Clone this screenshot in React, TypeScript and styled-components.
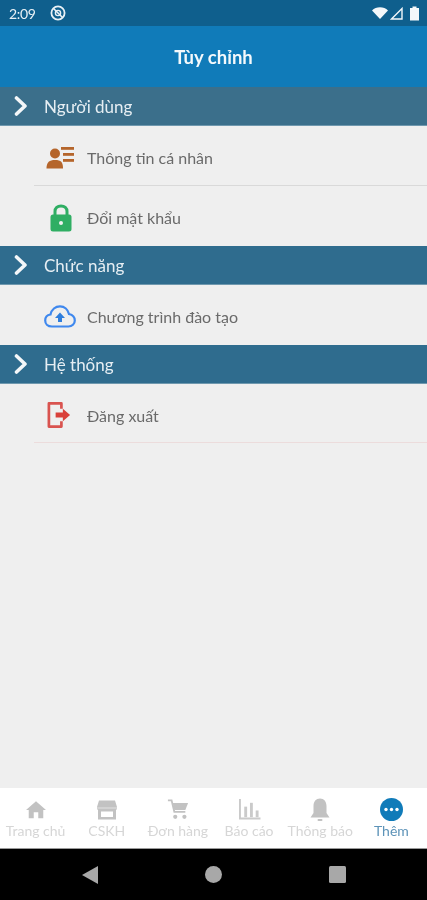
import React from 'react'
import styled, { createGlobalStyle } from 'styled-components'

const GlobalStyle = createGlobalStyle`
  html, body { margin: 0; padding: 0; background: #efefef; }
  body { font-family: "Lato", "Noto Sans", sans-serif; }
`

const Screen = styled.div`
  width: 427px;
  height: 900px;
  display: flex;
  flex-direction: column;
  background: #efefef;
  overflow: hidden;
  filter: blur(0.5px);
`

const StatusBar = styled.div`
  height: 26px;
  flex: none;
  display: flex;
  align-items: center;
  padding: 0 7px 0 9px;
  box-sizing: border-box;
  background: #0f5f8d;
  color: #e9f1f6;
  font-size: 14px;
`

const StatusTime = styled.span`
  width: 41px;
  letter-spacing: -0.3px;
`

const StatusRight = styled.div`
  margin-left: auto;
  display: flex;
  align-items: center;
  gap: 2px;
`

const Header = styled.div`
  height: 61px;
  flex: none;
  display: flex;
  align-items: center;
  justify-content: center;
  box-sizing: border-box;
  background: #107bb9;
  color: #f4f9fc;
  font-size: 18.5px;
  font-weight: 700;
`

const Section = styled.div<{ $first?: boolean }>`
  height: 39px;
  flex: none;
  display: flex;
  align-items: center;
  gap: 16px;
  padding-left: 14px;
  box-sizing: border-box;
  background: ${p => (p.$first ? '#3b6f8b' : '#2f6c8e')};
  border-bottom: 1px solid #6f98ae;
  color: #e6eef3;
  font-size: 17px;
`

const Row = styled.div<{ $line?: string; $height?: number }>`
  height: ${p => p.$height ?? 60}px;
  flex: none;
  margin-left: 34px;
  padding-top: ${p => (p.$height ? 4 : 3)}px;
  display: flex;
  align-items: center;
  box-sizing: border-box;
  border-bottom: ${p => (p.$line ? `1px solid ${p.$line}` : 'none')};
  color: #6a6a6a;
  font-size: 16px;
`

const IconSlot = styled.div<{ $nudge?: number }>`
  width: 53px;
  flex: none;
  display: flex;
  justify-content: center;
  box-sizing: border-box;
  padding-right: ${p => p.$nudge ?? 0}px;
`

const Spacer = styled.div`
  flex: 1;
`

const TabBar = styled.div`
  height: 61px;
  flex: none;
  display: grid;
  grid-template-columns: repeat(6, 1fr);
  background: #fff;
  border-bottom: 1px solid #9a9a9a;
  box-sizing: border-box;
`

const Tab = styled.div<{ $active?: boolean }>`
  display: flex;
  flex-direction: column;
  align-items: center;
  padding-top: 9px;
  box-sizing: border-box;
  color: ${p => (p.$active ? '#5d93b8' : '#d6d6d6')};
  font-size: 14px;
  line-height: 17px;
  white-space: nowrap;
`

const TabIcon = styled.div`
  height: 25px;
  display: flex;
  align-items: center;
  justify-content: center;
`

const NavBar = styled.div`
  height: 51px;
  flex: none;
  display: grid;
  grid-template-columns: 1fr 1fr 1fr;
  align-items: center;
  justify-items: center;
  padding: 0 28px;
  background: #000;
`

const Chevron = () => (
  <svg width="14" height="20" viewBox="0 0 14 20">
    <path d="M2.5 2 L11 10 L2.5 18" fill="none" stroke="#f4f7f9" strokeWidth="3.6" strokeLinecap="round" strokeLinejoin="round" />
  </svg>
)

const tabs = [
  {
    label: 'Trang chủ',
    icon: <svg width="20" height="19" viewBox="0 0 22 20"><path d="M11 1 L22 10.5 H19 V19.5 H13.5 V13 H8.5 V19.5 H3 V10.5 H0 Z" fill="#c2c2c2" /></svg>,
  },
  {
    label: 'CSKH',
    icon: <svg width="20" height="20" viewBox="0 0 20 20"><path d="M2 0.5 H18 L20 7 V9.5 H19 V19.5 H1 V9.5 H0 V7 Z" fill="#c2c2c2" /><rect x="4" y="11.5" width="12" height="5.5" fill="#fff" /><rect x="0" y="7.5" width="20" height="1" fill="#e2e2e2" /></svg>,
  },
  {
    label: 'Đơn hàng',
    icon: <svg width="22" height="23" viewBox="0 0 24 24"><path d="M1 2 H5 L8 14.5 H20" fill="none" stroke="#c2c2c2" strokeWidth="2" /><path d="M6 5 H23 L20 12.5 H8 Z" fill="#c2c2c2" /><circle cx="9" cy="20" r="2.3" fill="#c2c2c2" /><circle cx="19" cy="20" r="2.3" fill="#c2c2c2" /></svg>,
  },
  {
    label: 'Báo cáo',
    icon: <svg width="23" height="21" viewBox="0 0 23 22"><path d="M1.5 0 V20.5 H23" fill="none" stroke="#cacaca" strokeWidth="2" /><rect x="6" y="8" width="3" height="11" fill="#cacaca" /><rect x="12" y="4" width="3" height="15" fill="#cacaca" /><rect x="18" y="12" width="3" height="7" fill="#cacaca" /></svg>,
  },
  {
    label: 'Thông báo',
    icon: <svg width="20" height="24" viewBox="0 0 20 24"><path d="M10 0.5 C6 0.5 3.5 3.5 3.5 8 V15 L0.5 19.5 H19.5 L16.5 15 V8 C16.5 3.5 14 0.5 10 0.5 Z" fill="#c2c2c2" /><rect x="7.5" y="21" width="5" height="2" rx="1" fill="#c2c2c2" /></svg>,
  },
  {
    label: 'Thêm',
    active: true,
    icon: <svg width="23" height="23" viewBox="0 0 23 23"><circle cx="11.5" cy="11.5" r="11.5" fill="#107bb9" /><circle cx="6" cy="11.5" r="1.7" fill="#fff" /><circle cx="11.5" cy="11.5" r="1.7" fill="#fff" /><circle cx="17" cy="11.5" r="1.7" fill="#fff" /></svg>,
  },
]

const App = () => (
  <Screen>
    <GlobalStyle />
    <StatusBar>
      <StatusTime>2:09</StatusTime>
      <svg width="16" height="16" viewBox="0 0 16 16">
        <circle cx="8" cy="8" r="6.6" fill="none" stroke="#e9f1f6" strokeWidth="1.8" />
        <path d="M3.5 3.5 L12.5 12.5" stroke="#e9f1f6" strokeWidth="1.6" />
        <circle cx="8" cy="8" r="2.6" fill="none" stroke="#e9f1f6" strokeWidth="1.4" />
      </svg>
      <StatusRight>
        <svg width="16" height="12" viewBox="0 0 16 12"><path d="M0 3.5 C4 -0.8 12 -0.8 16 3.5 L8 12 Z" fill="#f3f7fa" /></svg>
        <svg width="13" height="13" viewBox="0 0 13 13"><path d="M12 1.5 V12 H1.5 Z" fill="none" stroke="#f3f7fa" strokeWidth="1.4" /></svg>
        <svg width="11" height="15" viewBox="0 0 11 15" style={{ marginLeft: 4 }}><path d="M3.5 0.5 H7.5 V2 H10 V14.5 H1 V2 H3.5 Z" fill="#f3f7fa" /></svg>
      </StatusRight>
    </StatusBar>
    <Header>Tùy chỉnh</Header>

    <Section $first><Chevron />Người dùng</Section>
    <Row $line="#d9d9d9">
      <IconSlot $nudge={2}>
        <svg width="28" height="23" viewBox="0 0 28 23">
          <circle cx="9" cy="7.5" r="5" fill="#b5652b" />
          <path d="M0.5 22.5 C0.5 16 3.5 14 9 14 C15 14 17 16 17 22.5 Z" fill="#b5652b" />
          <rect x="15" y="1" width="13" height="2.8" fill="#b5652b" />
          <rect x="17" y="7" width="11" height="2.8" fill="#b5652b" />
          <rect x="17" y="13" width="11" height="2.8" fill="#b5652b" />
        </svg>
      </IconSlot>
      Thông tin cá nhân
    </Row>
    <Row>
      <IconSlot>
        <svg width="22" height="28" viewBox="0 0 22 28">
          <path d="M5 12 V7.5 C5 4 7.5 2 11 2 C14.5 2 17 4 17 7.5 V12" fill="none" stroke="#2fae63" strokeWidth="3" />
          <rect x="0.5" y="10.5" width="21" height="17" rx="2.5" fill="#2fae63" />
          <circle cx="11" cy="19" r="2" fill="#f1f1f1" />
        </svg>
      </IconSlot>
      Đổi mật khẩu
    </Row>

    <Section><Chevron />Chức năng</Section>
    <Row>
      <IconSlot $nudge={2}>
        <svg width="32" height="23" viewBox="0 0 32 23">
          <path d="M8 21.5 C3.5 21.5 1.2 18.5 1.2 15.5 C1.2 12.5 3.2 10 6.5 9.5 C7.5 4.5 11.5 1.3 16 1.3 C20.5 1.3 24 4.5 25 9 C28.5 9.8 30.8 12.3 30.8 15.5 C30.8 19 28 21.5 24.5 21.5 Z" fill="none" stroke="#3f88ee" strokeWidth="2.2" />
          <path d="M16 7.5 L21 13 H18 V17 H14 V13 H11 Z" fill="#2f7edc" />
        </svg>
      </IconSlot>
      Chương trình đào tạo
    </Row>

    <Section><Chevron />Hệ thống</Section>
    <Row $line="#ecdcdc" $height={59}>
      <IconSlot $nudge={4}>
        <svg width="24" height="26" viewBox="0 0 24 27">
          <path d="M14.5 7 V1.5 H1.5 V25.5 H14.5 V20" fill="none" stroke="#d9534f" strokeWidth="2.8" strokeLinejoin="round" />
          <path d="M8.5 11 H16 V7 L23.5 13.5 L16 20 V16 H8.5 Z" fill="#d9403a" />
        </svg>
      </IconSlot>
      Đăng xuất
    </Row>

    <Spacer />

    <TabBar>
      {tabs.map(t => (
        <Tab key={t.label} $active={t.active}>
          <TabIcon>{t.icon}</TabIcon>
          {t.label}
        </Tab>
      ))}
    </TabBar>
    <NavBar>
      <svg width="18" height="20" viewBox="0 0 18 20"><path d="M17 1 V19 L1 10 Z" fill="#a8a8a8" /></svg>
      <svg width="17" height="17" viewBox="0 0 17 17"><circle cx="8.5" cy="8.5" r="8.5" fill="#a8a8a8" /></svg>
      <svg width="17" height="17" viewBox="0 0 17 17"><rect width="17" height="17" rx="1.5" fill="#a8a8a8" /></svg>
    </NavBar>
  </Screen>
)

export default App
